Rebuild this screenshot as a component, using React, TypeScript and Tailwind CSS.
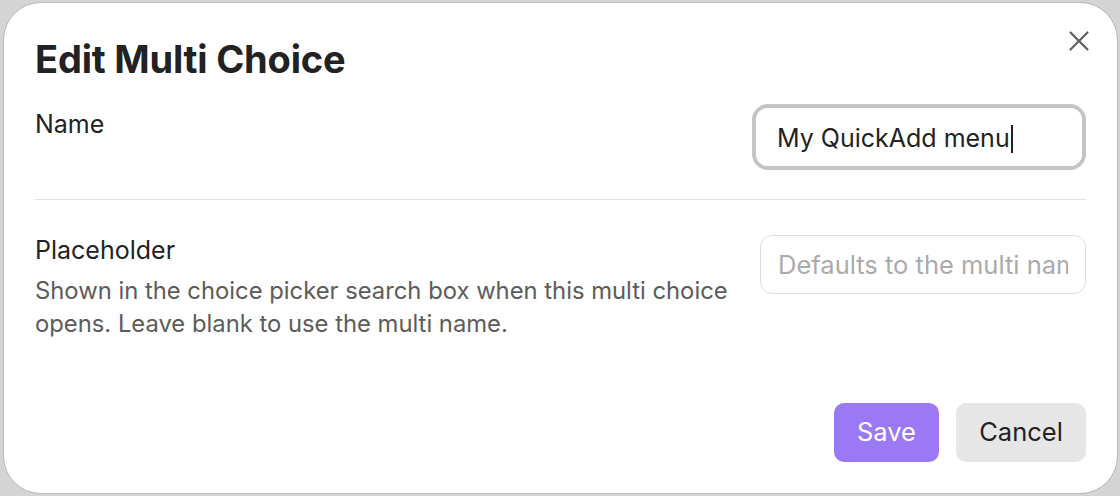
import { X } from 'lucide-react'

export default function App() {
  return (
    <div className="flex h-[496px] w-[1120px] bg-[#d4d4d4] pb-[2px] pl-[3px] pr-[2px] pt-[2px]" style={{ fontFamily: 'Inter, "Noto Sans", sans-serif' }}>
      <div className="relative flex flex-1 flex-col rounded-[38px] border border-[#b9b9b9] bg-white px-[31px] pt-[33px]">
        <button className="absolute right-[21px] top-[21px] flex h-[34px] w-[34px] items-center justify-center text-[#5e5e5e]">
          <X size={34} strokeWidth={1.5} />
        </button>

        <h1 className="text-[38px] font-bold leading-[47px] tracking-[-0.2px] text-[#222]">Edit Multi Choice</h1>

        <div className="mt-[21px] flex items-start justify-between">
          <div className="mt-[5px] text-[25px] leading-[30px] text-[#222]">Name</div>
          <div className="rounded-[16px] border-[4px] border-[#c4c4c4]">
            <div className="flex h-[58px] w-[326px] items-center rounded-[12px] bg-white pl-[21px] pt-[4px] text-[25px] text-[#222]">
              My QuickAdd menu
              <span className="ml-[1px] h-[28px] w-[2px] bg-[#222]" />
            </div>
          </div>
        </div>

        <div className="mt-[29px] h-[1px] bg-[#e3e3e3]" />

        <div className="mt-[34px] flex items-start justify-between">
          <div className="flex flex-col">
            <div className="mt-[1px] text-[25px] leading-[30px] text-[#222]">Placeholder</div>
            <div className="mt-[9px] w-[720px] text-[23.8px] leading-[33px] text-[#5c5c5c]">
              Shown in the choice picker search box when this multi choice opens. Leave blank to use the multi name.
            </div>
          </div>
          <input
            placeholder="Defaults to the multi name"
            className="mt-[1px] h-[59px] w-[326px] rounded-[12px] border border-[#dedede] bg-white px-[17px] text-[25.5px] text-[#222] outline-none placeholder:text-[#ababab]"
          />
        </div>

        <div className="mt-auto mb-[31px] flex justify-end gap-[17px]">
          <button className="h-[59px] w-[105px] rounded-[10px] bg-[#9b78f6] text-[25.5px] text-white">Save</button>
          <button className="h-[59px] w-[130px] rounded-[10px] bg-[#e6e6e6] text-[25.5px] text-[#222]">Cancel</button>
        </div>
      </div>
    </div>
  )
}
